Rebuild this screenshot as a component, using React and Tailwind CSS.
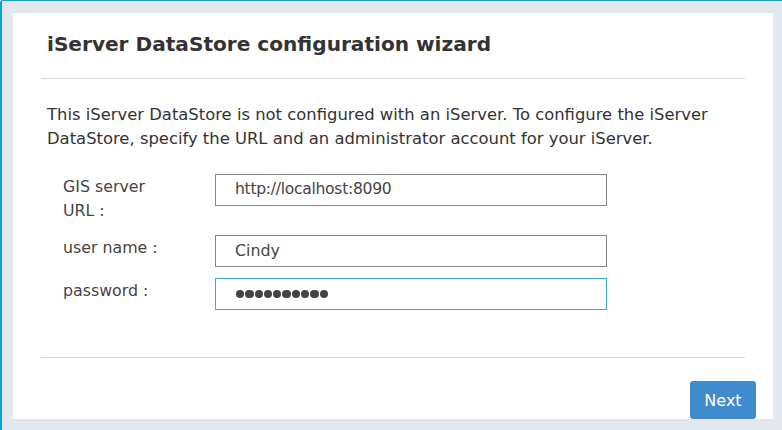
export default function App() {
  return (
    <div
      className="w-[782px] h-[430px] bg-[#e3e8f0] border-t border-l-2 border-[#09a3d6] rounded-tl-[3px] pt-[12px] pl-[11px] overflow-hidden"
      style={{ fontFamily: '"DejaVu Sans", Verdana, sans-serif' }}
    >
      <div className="w-[760px] h-[406px] bg-white flex flex-col px-[28px]">
        <div className="h-[66px] border-b border-[#d9d9d9] flex items-center pl-[6px] pb-[3px]">
          <h1 className="text-[20.1px] font-bold text-[#333333]">iServer DataStore configuration wizard</h1>
        </div>
        <p className="mt-[24px] pl-[6px] w-[690px] text-[16.4px] leading-[24px] text-[#333333]">
          This iServer DataStore is not configured with an iServer. To configure the iServer DataStore, specify the URL and an administrator account for your iServer.
        </p>
        <div className="mt-[23px] flex flex-col pl-[22px]">
          <div className="flex items-start h-[61px]">
            <div className="w-[152px] text-[15.8px] leading-[24px] text-[#444444] pt-[1px]">GIS server<br />URL :</div>
            <div className="w-[392px] h-[32px] border border-[#888888] flex items-center pl-[19px] text-[15.6px] text-[#444444] tracking-[-0.3px]">http://localhost:8090</div>
          </div>
          <div className="flex items-start h-[43px]">
            <div className="w-[152px] text-[15.8px] leading-[24px] text-[#444444] pt-[1px]">user name :</div>
            <div className="w-[392px] h-[32px] border border-[#888888] flex items-center pl-[19px] text-[15.8px] text-[#444444]">Cindy</div>
          </div>
          <div className="flex items-start">
            <div className="w-[152px] text-[15.8px] leading-[24px] text-[#444444] pt-[1px]">password :</div>
            <div className="w-[392px] h-[32px] border border-[#3ba7df] flex items-center pl-[20px] text-[#444444]">
              <span className="flex gap-[1px]">
                {Array.from({ length: 10 }).map((_, i) => (
                  <span key={i} className="w-[8.3px] h-[8.3px] rounded-full bg-[#444444]" />
                ))}
              </span>
            </div>
          </div>
        </div>
        <div className="mt-[47px] border-t border-[#d9d9d9]" />
        <div className="flex justify-end mt-[23px]">
          <button className="w-[66px] h-[38px] -mr-[11px] rounded-[3px] bg-[#3f8bcd] text-white text-[16px] pt-[2px]">Next</button>
        </div>
      </div>
    </div>
  );
}
